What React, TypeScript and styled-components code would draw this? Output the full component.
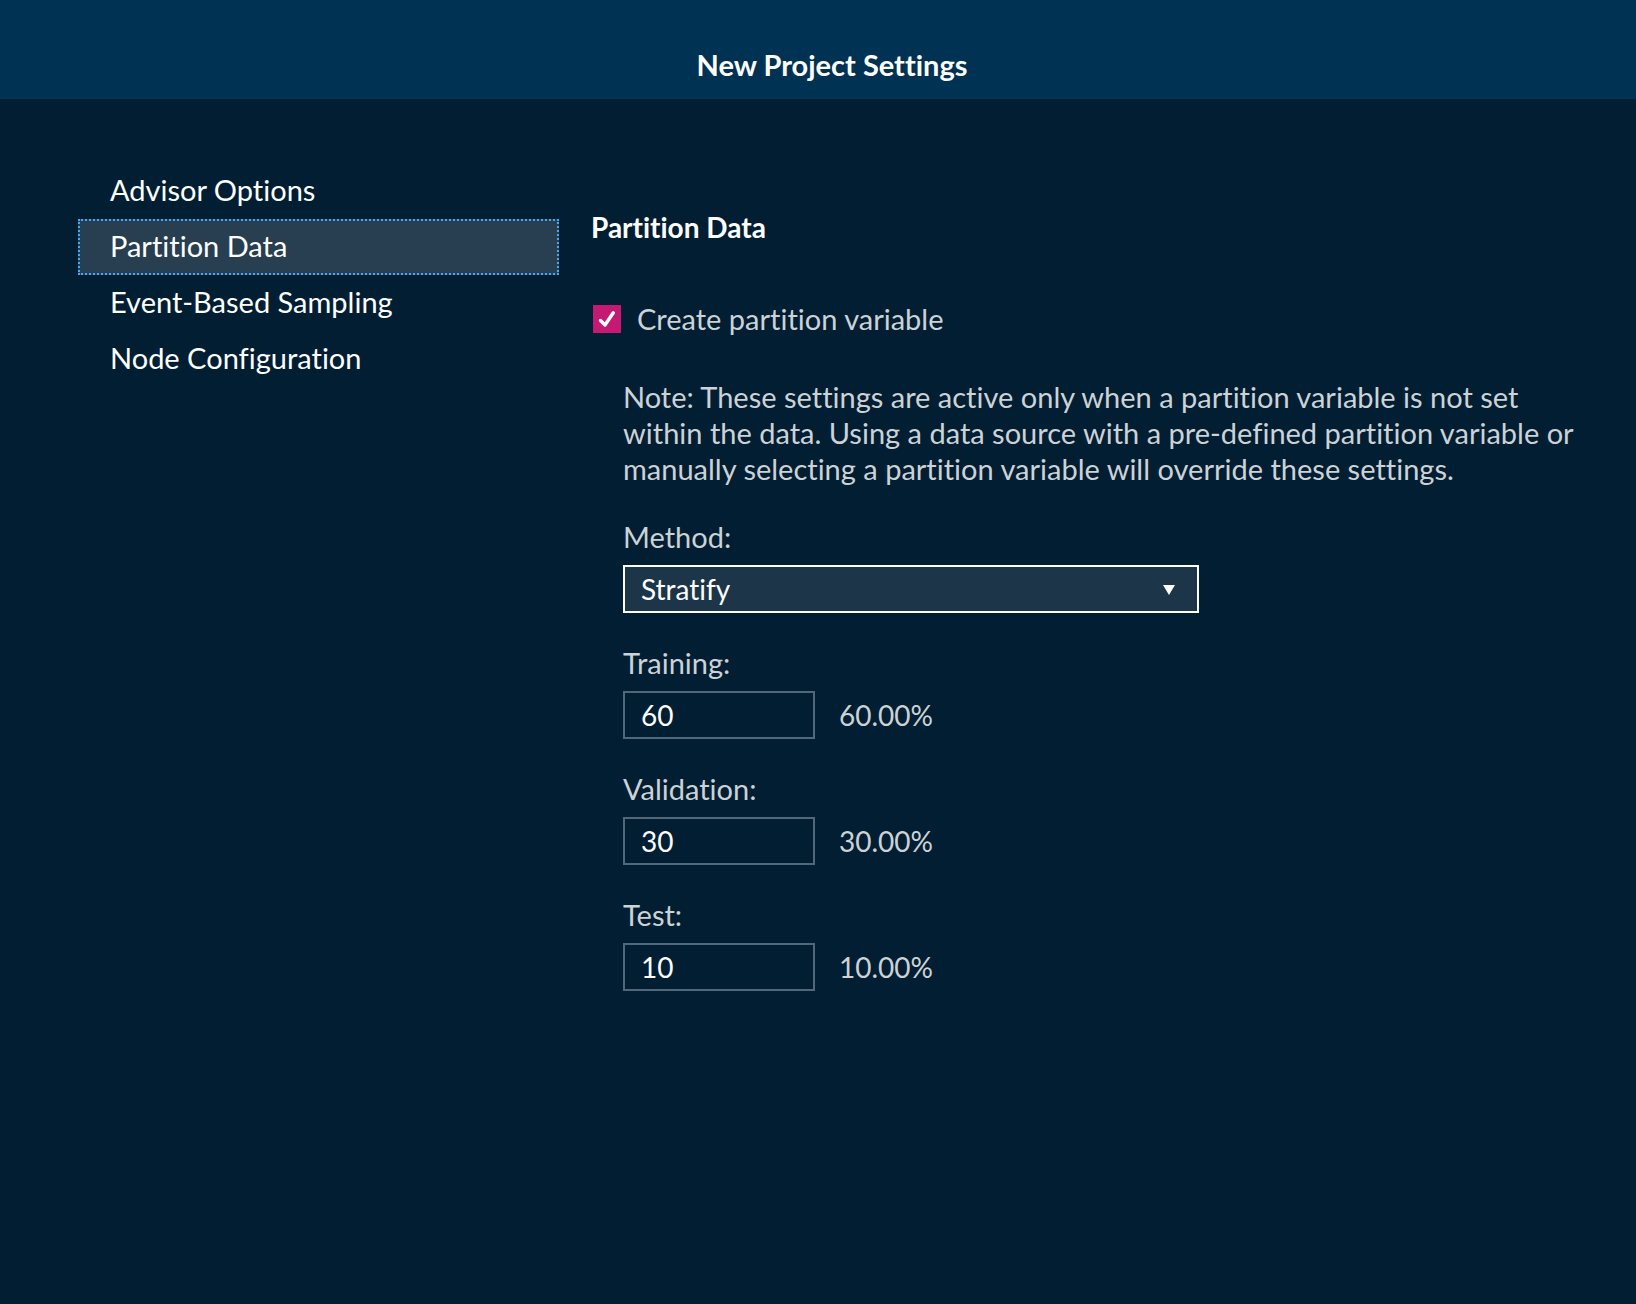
import React, { useState } from "react";
import styled, { createGlobalStyle } from "styled-components";

const GlobalStyle = createGlobalStyle`
  *, *::before, *::after { box-sizing: border-box; }
  body {
    margin: 0;
    background: #011e32;
    color: #ffffff;
    font-family: Lato, "Open Sans", sans-serif;
    font-size: 29px;
    line-height: 36px;
    font-variant-ligatures: none;
  }
  button, input, select { font: inherit; font-variant-ligatures: none; color: inherit; margin: 0; }
`;

const Page = styled.div`
  min-height: 100vh;
  display: flex;
  flex-direction: column;
`;

const Header = styled.header`
  display: flex;
  justify-content: center;
  padding: 47px 0 16px 28px;
  background: #003253;
`;

const Title = styled.h1`
  margin: 0;
  font-size: 29px;
  line-height: 36px;
  font-weight: 700;
`;

const Body = styled.div`
  display: flex;
  align-items: flex-start;
  gap: 32px;
  padding: 64px 36px 64px 78px;
`;

const Nav = styled.nav`
  flex: 0 0 481px;
  display: flex;
  flex-direction: column;
`;

const NavItem = styled.button<{ $selected: boolean }>`
  height: 56px;
  padding: 0 30px 2px;
  border: 2px dotted ${(p) => (p.$selected ? "#40a9f8" : "transparent")};
  background: ${(p) => (p.$selected ? "#283e51" : "transparent")};
  text-align: left;
  cursor: pointer;
  outline: none;
`;

const Panel = styled.main`
  flex: 1;
  min-width: 0;
  padding-top: 46px;
`;

const SectionTitle = styled.h2`
  margin: 0 0 56px;
  font-size: 28px;
  line-height: 36px;
  font-weight: 700;
`;

const CheckRow = styled.label`
  display: flex;
  align-items: center;
  gap: 16px;
  padding-left: 2px;
  color: #ccd2d6;
`;

const CheckBox = styled.span`
  display: grid;
  width: 28px;
  height: 28px;

  > * { grid-area: 1 / 1; }
  svg { pointer-events: none; visibility: hidden; }
  input:checked + svg { visibility: visible; }
`;

const CheckInput = styled.input`
  appearance: none;
  width: 28px;
  height: 28px;
  border: 2px solid #52677a;

  &:checked {
    border-color: #c41a73;
    background: #c41a73;
  }
`;

const Settings = styled.div`
  display: flex;
  flex-direction: column;
  gap: 32px;
  margin-top: 42px;
  padding-left: 32px;
  color: #ccd2d6;
`;

const Note = styled.p`
  margin: 0;
`;

const Field = styled.div`
  display: flex;
  flex-direction: column;
  align-items: flex-start;
  gap: 10px;
`;

const SelectBox = styled.div`
  display: grid;
  align-items: center;
  width: 100%;
  max-width: 576px;
  font-size: 28px;

  > * { grid-area: 1 / 1; }
  svg { justify-self: end; margin-right: 24px; pointer-events: none; }
`;

const Select = styled.select`
  appearance: none;
  width: 100%;
  height: 48px;
  padding: 0 48px 0 16px;
  border: 2px solid #ffffff;
  border-radius: 0;
  background: #1c3548;
  color: #ffffff;
  outline: none;
`;

const ValueRow = styled.div`
  display: flex;
  align-items: center;
  gap: 24px;
  font-size: 28px;
`;

const NumberInput = styled.input`
  width: 192px;
  height: 48px;
  padding: 0 16px;
  border: 2px solid #52677a;
  border-radius: 0;
  background: transparent;
  color: #ffffff;
`;

const sections = ["Advisor Options", "Partition Data", "Event-Based Sampling", "Node Configuration"];
const parts = ["Training", "Validation", "Test"];

export default function App() {
  const [section, setSection] = useState("Partition Data");
  const [values, setValues] = useState(["60", "30", "10"]);
  const total = values.reduce((sum, v) => sum + (Number(v) || 0), 0);
  const share = (v: string) => (total ? ((Number(v) || 0) / total) * 100 : 0).toFixed(2) + "%";

  return (
    <Page>
      <GlobalStyle />
      <Header>
        <Title>New Project Settings</Title>
      </Header>
      <Body>
        <Nav aria-label="Settings sections">
          {sections.map((name) => (
            <NavItem key={name} type="button" $selected={name === section} onClick={() => setSection(name)}>
              {name}
            </NavItem>
          ))}
        </Nav>
        <Panel>
          <SectionTitle>Partition Data</SectionTitle>
          <CheckRow htmlFor="create-partition">
            <CheckBox>
              <CheckInput id="create-partition" type="checkbox" defaultChecked />
              <svg width="28" height="28" viewBox="0 0 28 28" fill="none" aria-hidden="true">
                <path d="M7.5 15.5 L12 20 L20.3 7.8" stroke="#fff" strokeWidth="3.4" strokeLinecap="round" strokeLinejoin="round" />
              </svg>
            </CheckBox>
            Create partition variable
          </CheckRow>
          <Settings>
            <Note>
              Note: These settings are active only when a partition variable is not set
              <br />
              within the data. Using a data source with a pre-defined partition variable or
              <br />
              manually selecting a partition variable will override these settings.
            </Note>
            <Field>
              <label htmlFor="method">Method:</label>
              <SelectBox>
                <Select id="method" defaultValue="Stratify">
                  <option>Stratify</option>
                </Select>
                <svg width="12" height="12" viewBox="0 0 12 12" aria-hidden="true">
                  <path d="M0 2 H12 L6 12 Z" fill="#fff" />
                </svg>
              </SelectBox>
            </Field>
            {parts.map((name, i) => (
              <Field key={name}>
                <label htmlFor={name}>{name}:</label>
                <ValueRow>
                  <NumberInput
                    id={name}
                    type="text"
                    inputMode="numeric"
                    value={values[i]}
                    onChange={(e) => setValues(values.map((v, j) => (j === i ? e.target.value : v)))}
                  />
                  <span>{share(values[i])}</span>
                </ValueRow>
              </Field>
            ))}
          </Settings>
        </Panel>
      </Body>
    </Page>
  );
}
